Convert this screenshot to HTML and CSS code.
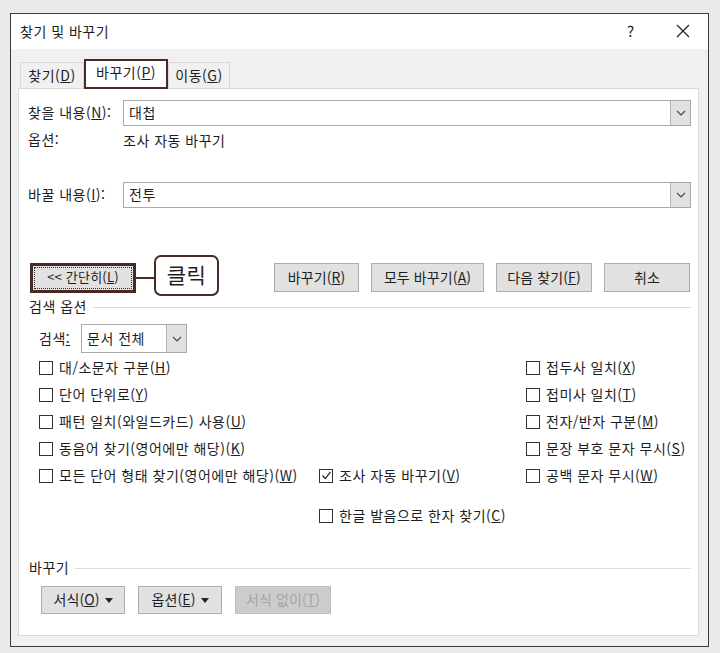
FILE: index.html
```html
<!DOCTYPE html>
<html lang="ko">
<head>
    <meta charset="UTF-8">
    <meta name="viewport" content="width=device-width, initial-scale=1.0">
    <title>찾기 및 바꾸기</title>
    <link rel="stylesheet" href="styles.css">
</head>
<body>
    <div class="dialog">
        <div class="titlebar">
            <span class="title">찾기 및 바꾸기</span>
            <span class="help">?</span>
            <span class="close">
                <svg width="14" height="14" viewBox="0 0 14 14"><path d="M1 1 L13 13 M13 1 L1 13" stroke="#222" stroke-width="1.2" fill="none"/></svg>
            </span>
        </div>
        <div class="body">
            <div class="tabs">
                <div class="tab">찾기(<u>D</u>)</div>
                <div class="tab active">바꾸기(<u>P</u>)</div>
                <div class="tab">이동(<u>G</u>)</div>
            </div>
            <div class="panel">
                <div class="field-row">
                    <span class="field-label">찾을 내용(<u>N</u>):</span>
                    <div class="combo">
                        <span class="combo-text">대첩</span>
                        <span class="drop"><svg width="10" height="6" viewBox="0 0 10 6"><path d="M1 1 L5 5 L9 1" stroke="#444" stroke-width="1.1" fill="none"/></svg></span>
                    </div>
                </div>
                <div class="opt-row">
                    <span class="field-label">옵션:</span>
                    <span>조사 자동 바꾸기</span>
                </div>
                <div class="field-row replace">
                    <span class="field-label">바꿀 내용(<u>I</u>):</span>
                    <div class="combo">
                        <span class="combo-text">전투</span>
                        <span class="drop"><svg width="10" height="6" viewBox="0 0 10 6"><path d="M1 1 L5 5 L9 1" stroke="#444" stroke-width="1.1" fill="none"/></svg></span>
                    </div>
                </div>
                <div class="btn-row">
                    <div class="less-btn"><span class="focus">&lt;&lt; 간단히(<u>L</u>)</span></div>
                    <span class="connector"></span>
                    <span class="callout">클릭</span>
                    <div class="right-btns">
                        <div class="btn w85">바꾸기(<u>R</u>)</div>
                        <div class="btn w113">모두 바꾸기(<u>A</u>)</div>
                        <div class="btn w96">다음 찾기(<u>F</u>)</div>
                        <div class="btn w86">취소</div>
                    </div>
                </div>
                <div class="group-label"><span>검색 옵션</span><span class="rule"></span></div>
                <div class="search-row">
                    <span class="search-label">검색<u>:</u></span>
                    <div class="select">
                        <span class="combo-text">문서 전체</span>
                        <span class="drop"><svg width="10" height="6" viewBox="0 0 10 6"><path d="M1 1 L5 5 L9 1" stroke="#444" stroke-width="1.1" fill="none"/></svg></span>
                    </div>
                </div>
                <div class="checks">
                    <div class="check c1"><span class="box"></span>대/소문자 구분(<u>H</u>)</div>
                    <div class="check c3"><span class="box"></span>접두사 일치(<u>X</u>)</div>
                    <div class="check c1"><span class="box"></span>단어 단위로(<u>Y</u>)</div>
                    <div class="check c3"><span class="box"></span>접미사 일치(<u>T</u>)</div>
                    <div class="check c1"><span class="box"></span>패턴 일치(와일드카드) 사용(<u>U</u>)</div>
                    <div class="check c3"><span class="box"></span>전자/반자 구분(<u>M</u>)</div>
                    <div class="check c1"><span class="box"></span>동음어 찾기(영어에만 해당)(<u>K</u>)</div>
                    <div class="check c3"><span class="box"></span>문장 부호 문자 무시(<u>S</u>)</div>
                    <div class="check c1"><span class="box"></span>모든 단어 형태 찾기(영어에만 해당)(<u>W</u>)</div>
                    <div class="check c2"><span class="box"><svg width="11" height="11" viewBox="0 0 11 11"><path d="M1.5 5.5 L4.3 8.5 L9.5 1.8" stroke="#222" stroke-width="1.2" fill="none"/></svg></span>조사 자동 바꾸기(<u>V</u>)</div>
                    <div class="check c3"><span class="box"></span>공백 문자 무시(<u>W</u>)</div>
                    <div class="check c2 extra"><span class="box"></span>한글 발음으로 한자 찾기(<u>C</u>)</div>
                </div>
                <div class="group-label bottom-label"><span>바꾸기</span><span class="rule"></span></div>
                <div class="bottom-btns">
                    <div class="btn w84">서식(<u>O</u>)<svg class="tri" width="8" height="5" viewBox="0 0 8 5"><path d="M0 0 H8 L4 5 Z" fill="#222"/></svg></div>
                    <div class="btn w84">옵션(<u>E</u>)<svg class="tri" width="8" height="5" viewBox="0 0 8 5"><path d="M0 0 H8 L4 5 Z" fill="#222"/></svg></div>
                    <div class="btn w96 disabled">서식 없이(<u>T</u>)</div>
                </div>
            </div>
        </div>
    </div>
</body>
</html>
```

FILE: styles.css
```css
*{
    margin: 0;
    padding: 0;
    box-sizing: border-box;
}
body{
    background-color: #eaeaea;
    font-family: "Noto Sans CJK KR", "Noto Sans", sans-serif;
    font-size: 14px;
    letter-spacing: 0.5px;
    color: #1e1e1e;
    line-height: 18px;
}
u{
    text-decoration: underline;
    text-underline-offset: 1px;
}
.dialog{
    margin: 13px 0 0 10px;
    width: 699px;
    height: 634px;
    border: 1px solid #3c3c3c;
    background-color: #f0f0f0;
    display: flex;
    flex-direction: column;
}
.titlebar{
    height: 35px;
    background-color: #ffffff;
    display: flex;
    align-items: center;
    padding-left: 9px;
    padding-bottom: 2px;
}
.title{
    flex: 1;
}
.help{
    width: 49px;
    font-size: 15px;
}
.close{
    width: 32px;
    display: flex;
    align-items: center;
}
.body{
    flex: 1;
    padding: 9px 9px 10px 7px;
    display: flex;
    flex-direction: column;
}
.tabs{
    display: flex;
    align-items: flex-end;
    padding-left: 2px;
    height: 30px;
}
.tab{
    height: 26px;
    width: 64px;
    padding-bottom: 2px;
    display: flex;
    align-items: center;
    justify-content: center;
    border: 1px solid #d9d9d9;
    border-bottom: none;
    background-color: #f0f0f0;
}
.tab:last-child{
    width: 62px;
}
.tab.active{
    height: 30px;
    width: 84px;
    background-color: #ffffff;
    border: 2px solid #4a2a22;
    padding-bottom: 4px;
    position: relative;
    z-index: 1;
    margin-bottom: -1px;
}
.panel{
    flex: 1;
    background-color: #ffffff;
    border: 1px solid #dadada;
    padding: 11px 7px 0 9px;
}
.field-row{
    display: flex;
    align-items: center;
}
.field-label{
    width: 95px;
    padding-bottom: 2px;
}
.combo, .select{
    flex: 1;
    height: 26px;
    border: 1px solid #a9a9a9;
    display: flex;
    align-items: center;
}
.combo-text{
    flex: 1;
    padding: 0 0 2px 5px;
}
.drop{
    width: 20px;
    height: 24px;
    background-color: #e1e1e1;
    border-left: 1px solid #b5b5b5;
    display: flex;
    align-items: center;
    justify-content: center;
}
.opt-row{
    display: flex;
    align-items: center;
    height: 20px;
    margin-top: 4px;
}
.replace{
    margin-top: 32px;
}
.btn-row{
    display: flex;
    align-items: center;
    height: 29px;
    margin-top: 55px;
}
.less-btn{
    width: 106px;
    height: 30px;
    margin-left: 2px;
    border: 3px solid #4a2a22;
    background-color: #e1e1e1;
    padding: 1px;
    display: flex;
}
.focus{
    flex: 1;
    border: 1px dotted #333;
    display: flex;
    align-items: center;
    justify-content: center;
    font-size: 13px;
    letter-spacing: 0.2px;
    padding-bottom: 2px;
}
.connector{
    width: 18px;
    height: 2px;
    background-color: #4a2a22;
}
.callout{
    width: 65px;
    height: 41px;
    margin: -6px 0 -6px 0;
    border: 2px solid #4a2a22;
    border-radius: 7px;
    background-color: #ffffff;
    display: flex;
    align-items: center;
    justify-content: center;
    font-size: 21px;
    font-weight: 400;
    padding-bottom: 3px;
    position: relative;
    top: -2px;
}
.right-btns{
    margin-left: auto;
    display: flex;
    gap: 12px;
    margin-right: 1px;
}
.btn{
    height: 29px;
    background-color: #e1e1e1;
    border: 1px solid #adadad;
    display: flex;
    align-items: center;
    justify-content: center;
    font-size: 14px;
    letter-spacing: 0.1px;
    padding-bottom: 2px;
}
.w84{ width: 84px; }
.w85{ width: 85px; }
.w86{ width: 86px; }
.w96{ width: 96px; }
.w113{ width: 113px; }
.group-label{
    display: flex;
    align-items: center;
    height: 18px;
    margin-top: 6px;
    margin-left: 1px;
}
.group-label span:first-child{
    padding-bottom: 2px;
}
.rule{
    flex: 1;
    height: 1px;
    background-color: #dcdcdc;
    margin-left: 6px;
}
.search-row{
    display: flex;
    align-items: center;
    margin-top: 8px;
    padding-left: 11px;
}
.search-label{
    width: 42px;
    padding-bottom: 2px;
}
.select{
    flex: none;
    width: 106px;
    height: 29px;
}
.select .drop{
    height: 27px;
}
.checks{
    display: grid;
    grid-template-columns: 280px 207px auto;
    grid-auto-rows: 27px;
    margin-top: 1px;
    padding-left: 11px;
}
.check{
    display: flex;
    align-items: center;
    padding-bottom: 2px;
}
.c1{ grid-column: 1; }
.c2{ grid-column: 2; }
.c3{ grid-column: 3; }
.extra{
    grid-row: 6;
    margin-top: 13px;
    margin-bottom: -13px;
}
.box{
    width: 14px;
    height: 14px;
    border: 1px solid #333;
    background-color: #ffffff;
    margin: 2px 6px 0 0;
    display: flex;
    align-items: center;
    justify-content: center;
}
.bottom-label{
    margin-top: 43px;
}
.bottom-btns{
    display: flex;
    gap: 13px;
    margin-top: 9px;
    padding-left: 13px;
}
.bottom-btns .btn{
    height: 28px;
}
.tri{
    margin-left: 5px;
    margin-top: 2px;
}
.disabled{
    background-color: #cccccc;
    border-color: #bfbfbf;
    color: #a3a3a3;
}
```
